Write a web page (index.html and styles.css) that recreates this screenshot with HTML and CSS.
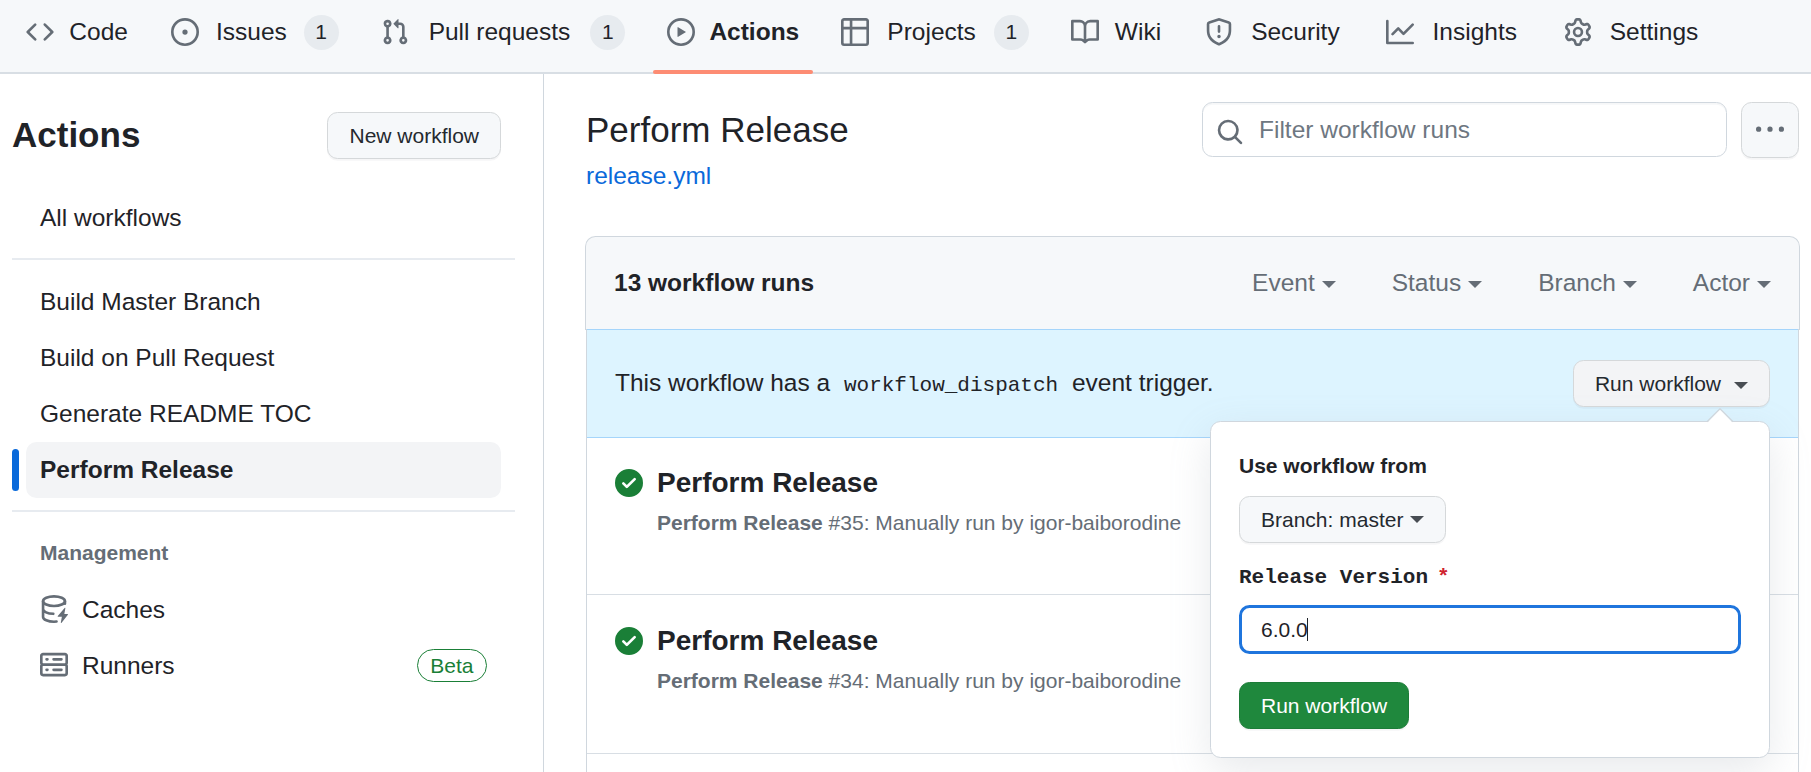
FILE: index.html
```html
<!DOCTYPE html>
<html lang="en">
<head>
<meta charset="utf-8">
<title>Actions · Perform Release</title>
<link rel="stylesheet" href="styles.css">
</head>
<body>
<nav class="repo-nav">
  <a class="tab"><svg class="icon" viewBox="0 0 16 16"><path d="m11.28 3.22 4.25 4.25a.75.75 0 0 1 0 1.06l-4.25 4.25a.749.749 0 0 1-1.275-.326.749.749 0 0 1 .215-.734L13.94 8l-3.72-3.72a.749.749 0 0 1 .326-1.275.749.749 0 0 1 .734.215Zm-6.56 0a.751.751 0 0 1 1.042.018.751.751 0 0 1 .018 1.042L2.06 8l3.72 3.72a.749.749 0 0 1-.326 1.275.749.749 0 0 1-.734-.215L.47 8.53a.75.75 0 0 1 0-1.06Z"/></svg><span class="tab-label" data-content="Code">Code</span></a>
  <a class="tab"><svg class="icon" viewBox="0 0 16 16"><path d="M8 9.5a1.5 1.5 0 1 0 0-3 1.5 1.5 0 0 0 0 3Z"/><path d="M8 0a8 8 0 1 1 0 16A8 8 0 0 1 8 0ZM1.5 8a6.5 6.5 0 1 0 13 0 6.5 6.5 0 0 0-13 0Z"/></svg><span class="tab-label" data-content="Issues">Issues</span><span class="counter">1</span></a>
  <a class="tab"><svg class="icon" viewBox="0 0 16 16"><path d="M1.5 3.25a2.25 2.25 0 1 1 3 2.122v5.256a2.251 2.251 0 1 1-1.5 0V5.372A2.25 2.25 0 0 1 1.5 3.25Zm5.677-.177L9.573.677A.25.25 0 0 1 10 .854V2.5h1A2.5 2.5 0 0 1 13.5 5v5.628a2.251 2.251 0 1 1-1.5 0V5a1 1 0 0 0-1-1h-1v1.646a.25.25 0 0 1-.427.177L7.177 3.427a.25.25 0 0 1 0-.354ZM3.75 2.5a.75.75 0 1 0 0 1.5.75.75 0 0 0 0-1.5Zm0 9.5a.75.75 0 1 0 0 1.5.75.75 0 0 0 0-1.5Zm8.25.75a.75.75 0 1 0 1.5 0 .75.75 0 0 0-1.5 0Z"/></svg><span class="tab-label" data-content="Pull requests">Pull requests</span><span class="counter">1</span></a>
  <a class="tab tab-selected"><svg class="icon" viewBox="0 0 16 16"><path d="M8 0a8 8 0 1 1 0 16A8 8 0 0 1 8 0ZM1.5 8a6.5 6.5 0 1 0 13 0 6.5 6.5 0 0 0-13 0Zm4.879-2.773 4.264 2.559a.25.25 0 0 1 0 .428l-4.264 2.559A.25.25 0 0 1 6 10.559V5.442a.25.25 0 0 1 .379-.215Z"/></svg><span class="tab-label" data-content="Actions">Actions</span></a>
  <a class="tab"><svg class="icon" viewBox="0 0 16 16"><path d="M0 1.75C0 .784.784 0 1.75 0h12.5C15.216 0 16 .784 16 1.75v12.5A1.75 1.75 0 0 1 14.25 16H1.75A1.75 1.75 0 0 1 0 14.25ZM6.5 6.5v8h7.75a.25.25 0 0 0 .25-.25V6.5Zm8-1.5V1.75a.25.25 0 0 0-.25-.25H6.5V5Zm-13 1.5v7.75c0 .138.112.25.25.25H5v-8ZM5 5V1.5H1.75a.25.25 0 0 0-.25.25V5Z"/></svg><span class="tab-label" data-content="Projects">Projects</span><span class="counter">1</span></a>
  <a class="tab"><svg class="icon" viewBox="0 0 16 16"><path d="M0 1.75A.75.75 0 0 1 .75 1h4.253c1.227 0 2.317.59 3 1.501A3.743 3.743 0 0 1 11.006 1h4.245a.75.75 0 0 1 .75.75v10.5a.75.75 0 0 1-.75.75h-4.507a2.25 2.25 0 0 0-1.591.659l-.622.621a.75.75 0 0 1-1.06 0l-.622-.621A2.25 2.25 0 0 0 5.258 13H.75a.75.75 0 0 1-.75-.75Zm7.251 10.324.004-5.073-.002-2.253A2.25 2.25 0 0 0 5.003 2.5H1.5v9h3.757a3.75 3.75 0 0 1 1.994.574ZM8.755 4.75l-.004 7.322a3.752 3.752 0 0 1 1.992-.572H14.5v-9h-3.495a2.25 2.25 0 0 0-2.25 2.25Z"/></svg><span class="tab-label" data-content="Wiki">Wiki</span></a>
  <a class="tab"><svg class="icon" viewBox="0 0 16 16"><path d="M7.467.133a1.748 1.748 0 0 1 1.066 0l5.25 1.68A1.75 1.75 0 0 1 15 3.48V7c0 1.566-.32 3.182-1.303 4.682-.983 1.498-2.585 2.813-5.032 3.855a1.697 1.697 0 0 1-1.33 0c-2.447-1.042-4.049-2.357-5.032-3.855C1.32 10.182 1 8.566 1 7V3.48a1.75 1.75 0 0 1 1.217-1.667Zm.61 1.429a.25.25 0 0 0-.153 0l-5.25 1.68a.25.25 0 0 0-.174.238V7c0 1.358.275 2.666 1.057 3.86.784 1.194 2.121 2.34 4.366 3.297a.196.196 0 0 0 .154 0c2.245-.956 3.582-2.104 4.366-3.298C13.225 9.666 13.5 8.36 13.5 7V3.48a.251.251 0 0 0-.174-.237l-5.25-1.68ZM8.75 4.75v3a.75.75 0 0 1-1.5 0v-3a.75.75 0 0 1 1.5 0ZM9 10.5a1 1 0 1 1-2 0 1 1 0 0 1 2 0Z"/></svg><span class="tab-label" data-content="Security">Security</span></a>
  <a class="tab"><svg class="icon" viewBox="0 0 16 16"><path d="M1.5 1.75V13.5h13.75a.75.75 0 0 1 0 1.5H.75a.75.75 0 0 1-.75-.75V1.75a.75.75 0 0 1 1.5 0Zm14.28 2.53-5.25 5.25a.75.75 0 0 1-1.06 0L7 7.06 4.28 9.78a.751.751 0 0 1-1.042-.018.751.751 0 0 1-.018-1.042l3.25-3.25a.75.75 0 0 1 1.06 0L10 7.94l4.72-4.72a.751.751 0 0 1 1.042.018.751.751 0 0 1 .018 1.042Z"/></svg><span class="tab-label" data-content="Insights">Insights</span></a>
  <a class="tab"><svg class="icon" viewBox="0 0 16 16"><path d="M8 0a8.2 8.2 0 0 1 .701.031C9.444.095 9.99.645 10.16 1.29l.288 1.107c.018.066.079.158.212.224.231.114.454.243.668.386.123.082.233.09.299.071l1.103-.303c.644-.176 1.392.021 1.82.63.27.385.506.792.704 1.218.315.675.111 1.422-.364 1.891l-.814.806c-.049.048-.098.147-.088.294.016.257.016.515 0 .772-.01.147.038.246.088.294l.814.806c.475.469.679 1.216.364 1.891a7.977 7.977 0 0 1-.704 1.217c-.428.61-1.176.807-1.82.63l-1.102-.302c-.067-.019-.177-.011-.3.071a5.909 5.909 0 0 1-.668.386c-.133.066-.194.158-.211.224l-.29 1.106c-.168.646-.715 1.196-1.458 1.26a8.006 8.006 0 0 1-1.402 0c-.743-.064-1.289-.614-1.458-1.26l-.289-1.106c-.018-.066-.079-.158-.212-.224a5.738 5.738 0 0 1-.668-.386c-.123-.082-.233-.09-.299-.071l-1.103.303c-.644.176-1.392-.021-1.82-.63a8.12 8.12 0 0 1-.704-1.218c-.315-.675-.111-1.422.363-1.891l.815-.806c.05-.048.098-.147.088-.294a6.214 6.214 0 0 1 0-.772c.01-.147-.038-.246-.088-.294l-.815-.806C.635 6.045.431 5.298.746 4.623a7.92 7.92 0 0 1 .704-1.217c.428-.61 1.176-.807 1.82-.63l1.102.302c.067.019.177.011.3-.071.214-.143.437-.272.668-.386.133-.066.194-.158.211-.224l.29-1.106C6.009.645 6.556.095 7.299.03 7.53.01 7.764 0 8 0Zm-.571 1.525c-.036.003-.108.036-.137.146l-.289 1.105c-.147.561-.549.967-.998 1.189-.173.086-.34.183-.5.29-.417.278-.97.423-1.529.27l-1.103-.303c-.109-.03-.175.016-.195.045-.22.312-.412.644-.573.99-.014.031-.021.11.059.19l.815.806c.411.406.562.957.53 1.456a4.709 4.709 0 0 0 0 .582c.032.499-.119 1.05-.53 1.456l-.815.806c-.081.08-.073.159-.059.19.162.346.353.677.573.989.02.03.085.076.195.046l1.102-.303c.56-.153 1.113-.008 1.53.27.161.107.328.204.501.29.447.222.85.629.997 1.189l.289 1.105c.029.109.101.143.137.146a6.6 6.6 0 0 0 1.142 0c.036-.003.108-.036.137-.146l.289-1.105c.147-.561.549-.967.998-1.189.173-.086.34-.183.5-.29.417-.278.97-.423 1.529-.27l1.103.303c.109.029.175-.016.195-.045.22-.313.411-.644.573-.99.014-.031.021-.11-.059-.19l-.815-.806c-.411-.406-.562-.957-.53-1.456a4.709 4.709 0 0 0 0-.582c-.032-.499.119-1.05.53-1.456l.815-.806c.081-.08.073-.159.059-.19a6.464 6.464 0 0 0-.573-.989c-.02-.03-.085-.076-.195-.046l-1.102.303c-.56.153-1.113.008-1.53-.27a4.44 4.44 0 0 0-.501-.29c-.447-.222-.85-.629-.997-1.189l-.289-1.105c-.029-.11-.101-.143-.137-.146a6.6 6.6 0 0 0-1.142 0ZM11 8a3 3 0 1 1-6 0 3 3 0 0 1 6 0ZM9.5 8a1.5 1.5 0 1 0-3.001.001A1.5 1.5 0 0 0 9.5 8Z"/></svg><span class="tab-label" data-content="Settings">Settings</span></a>
</nav>

<div class="layout">
  <aside class="sidebar">
    <div class="sidebar-head">
      <h2 class="sidebar-title">Actions</h2>
      <button class="btn">New workflow</button>
    </div>
    <div class="side-item">All workflows</div>
    <div class="divider"></div>
    <div class="side-item">Build Master Branch</div>
    <div class="side-item">Build on Pull Request</div>
    <div class="side-item">Generate README TOC</div>
    <div class="side-item side-item-active">Perform Release</div>
    <div class="divider"></div>
    <div class="side-heading">Management</div>
    <div class="side-item"><svg class="icon" viewBox="0 0 16 16"><g fill="none" stroke="currentColor" stroke-width="1.5" stroke-linecap="round"><ellipse cx="8" cy="3.5" rx="6.25" ry="2.75"/><path d="M1.75 3.5v9c0 1.5 2.8 2.75 6.25 2.75.5 0 1 0 1.45-.08M1.75 8c0 1.5 2.6 2.7 5.85 2.75M14.25 3.5V5"/></g><path d="M14.49 7.58a.25.25 0 0 0-.43-.21l-3.9 4.66a.25.25 0 0 0 .19.41h2.15l-.6 3.26a.25.25 0 0 0 .44.2l3.6-4.66a.25.25 0 0 0-.2-.4H13.9Z"/></svg>Caches</div>
    <div class="side-item"><svg class="icon" viewBox="0 0 16 16"><path d="M1.75 1h12.5c.966 0 1.75.784 1.75 1.75v4c0 .372-.116.717-.314 1 .198.283.314.628.314 1v4a1.75 1.75 0 0 1-1.75 1.75H1.75A1.75 1.75 0 0 1 0 12.75v-4c0-.358.109-.707.314-1a1.739 1.739 0 0 1-.314-1v-4C0 1.784.784 1 1.75 1ZM1.5 2.75v4c0 .138.112.25.25.25h12.5a.25.25 0 0 0 .25-.25v-4a.25.25 0 0 0-.25-.25H1.75a.25.25 0 0 0-.25.25Zm.25 5.75a.25.25 0 0 0-.25.25v4c0 .138.112.25.25.25h12.5a.25.25 0 0 0 .25-.25v-4a.25.25 0 0 0-.25-.25ZM7 4.75A.75.75 0 0 1 7.75 4h4.5a.75.75 0 0 1 0 1.5h-4.5A.75.75 0 0 1 7 4.75ZM7.75 10h4.5a.75.75 0 0 1 0 1.5h-4.5a.75.75 0 0 1 0-1.5ZM3 4.75A.75.75 0 0 1 3.75 4h.5a.75.75 0 0 1 0 1.5h-.5A.75.75 0 0 1 3 4.75ZM3.75 10h.5a.75.75 0 0 1 0 1.5h-.5a.75.75 0 0 1 0-1.5Z"/></svg>Runners<span class="label-beta">Beta</span></div>
  </aside>

  <main class="content">
    <header class="page-head">
      <div>
        <h1 class="page-title">Perform Release</h1>
        <a class="file-link">release.yml</a>
      </div>
      <div class="head-tools">
        <div class="search"><svg class="icon" viewBox="0 0 16 16"><path d="M10.68 11.74a6 6 0 0 1-7.922-8.982 6 6 0 0 1 8.982 7.922l3.04 3.04a.749.749 0 0 1-.326 1.275.749.749 0 0 1-.734-.215ZM11.5 7a4.499 4.499 0 1 0-8.997 0A4.499 4.499 0 0 0 11.5 7Z"/></svg><span>Filter workflow runs</span></div>
        <button class="btn btn-more"><svg class="icon" viewBox="0 0 16 16"><path d="M8 9a1.5 1.5 0 1 0 0-3 1.5 1.5 0 0 0 0 3ZM1.5 9a1.5 1.5 0 1 0 0-3 1.5 1.5 0 0 0 0 3Zm13 0a1.5 1.5 0 1 0 0-3 1.5 1.5 0 0 0 0 3Z"/></svg></button>
      </div>
    </header>

    <section class="runs">
      <div class="runs-head">
        <strong>13 workflow runs</strong>
        <div class="filters">
          <span class="filter">Event<i class="caret"></i></span>
          <span class="filter">Status<i class="caret"></i></span>
          <span class="filter">Branch<i class="caret"></i></span>
          <span class="filter">Actor<i class="caret"></i></span>
        </div>
      </div>
      <div class="runs-body">
        <div class="dispatch">
          <p class="dispatch-text">This workflow has a <code class="dispatch-code">workflow_dispatch</code> event trigger.</p>
          <div class="dispatch-menu">
            <button class="btn btn-open">Run workflow<i class="caret"></i></button>
            <div class="popover">
              <svg class="popover-arrow" viewBox="0 0 28 15"><path class="arrow-fill" d="M1 15 14 1 27 15Z"/><path class="arrow-line" d="M1 13.8 14 .8 27 13.8"/></svg>
              <div class="field-title">Use workflow from</div>
              <button class="btn btn-branch">Branch: master<i class="caret"></i></button>
              <div class="field-title field-mono">Release Version<span class="required">*</span></div>
              <div class="text-input">6.0.0<span class="cursor"></span></div>
              <button class="btn btn-primary">Run workflow</button>
            </div>
          </div>
        </div>
        <article class="run">
          <svg class="icon icon-ok" viewBox="0 0 16 16"><path d="M8 16A8 8 0 1 1 8 0a8 8 0 0 1 0 16Zm3.78-9.72a.751.751 0 0 0-.018-1.042.751.751 0 0 0-1.042-.018L6.75 9.19 5.28 7.72a.751.751 0 0 0-1.042.018.751.751 0 0 0-.018 1.042l2 2a.75.75 0 0 0 1.06 0Z"/></svg>
          <div>
            <h3 class="run-title">Perform Release</h3>
            <p class="run-meta"><b>Perform Release</b> #35: Manually run by igor-baiborodine</p>
          </div>
        </article>
        <article class="run">
          <svg class="icon icon-ok" viewBox="0 0 16 16"><path d="M8 16A8 8 0 1 1 8 0a8 8 0 0 1 0 16Zm3.78-9.72a.751.751 0 0 0-.018-1.042.751.751 0 0 0-1.042-.018L6.75 9.19 5.28 7.72a.751.751 0 0 0-1.042.018.751.751 0 0 0-.018 1.042l2 2a.75.75 0 0 0 1.06 0Z"/></svg>
          <div>
            <h3 class="run-title">Perform Release</h3>
            <p class="run-meta"><b>Perform Release</b> #34: Manually run by igor-baiborodine</p>
          </div>
        </article>
      </div>
    </section>
  </main>
</div>
</body>
</html>
```

FILE: styles.css
```css
* { box-sizing: border-box; }

body {
  margin: 0;
  height: 772px;
  overflow: hidden;
  display: flex;
  flex-direction: column;
  background: #fff;
  color: #1f2328;
  font: 24.5px/36px "Liberation Sans", Arial, sans-serif;
}

h1, h2, h3, p { margin: 0; }

.icon { width: 28px; height: 28px; flex: none; fill: currentColor; color: #656d76; }

/* Repository tabs */
.repo-nav {
  flex: none;
  display: flex;
  gap: 14px;
  height: 74px;
  padding: 0 12px 8px;
  background: #f6f8fa;
  border-bottom: 2px solid #d8dee4;
}
.tab {
  position: relative;
  display: flex;
  align-items: center;
  gap: 14px;
  padding: 0 14px;
  white-space: nowrap;
}
.tab-label { text-align: center; }
.tab-label::before {
  content: attr(data-content);
  display: block;
  height: 0;
  font-weight: 700;
  visibility: hidden;
}
.tab-selected { font-weight: 700; }
.tab-selected::after {
  content: "";
  position: absolute;
  left: 0;
  right: 0;
  bottom: -10px;
  height: 4px;
  border-radius: 2px;
  background: #fd8c73;
}
.counter {
  width: 35px;
  height: 35px;
  border-radius: 50%;
  background: #e7ebef;
  font-size: 21px;
  line-height: 34px;
  text-align: center;
}

.layout { flex: 1; display: flex; min-height: 0; }

/* Sidebar */
.sidebar {
  flex: none;
  width: 544px;
  padding: 38px 28px 0 12px;
  border-right: 1px solid #d0d7de;
}
.sidebar-head {
  display: flex;
  align-items: center;
  justify-content: space-between;
  height: 47px;
  margin: 0 14px 31px 0;
}
.sidebar-title { margin-top: -2px; font-size: 35px; line-height: 46px; }
.side-item {
  position: relative;
  display: flex;
  align-items: center;
  gap: 14px;
  height: 56px;
  margin: 0 14px;
  padding: 0 14px;
  border-radius: 10.5px;
}
.side-item .icon { margin-top: -2px; }
.side-item-active { background: #f3f4f6; font-weight: 700; }
.side-item-active::before {
  content: "";
  position: absolute;
  left: -14px;
  top: 7px;
  width: 7px;
  height: 42px;
  border-radius: 4px;
  background: #0969da;
}
.divider { height: 2px; margin: 12px 0 14px; background: #e7ebf0; }
.side-heading {
  height: 56px;
  margin-left: 28px;
  color: #656d76;
  font-size: 21px;
  font-weight: 700;
  line-height: 53px;
}
.label-beta {
  height: 33px;
  margin: -1px 0 0 auto;
  padding: 0 12.5px;
  border: 1px solid #1a7f37;
  border-radius: 17px;
  color: #1a7f37;
  font-size: 21px;
  line-height: 31px;
}

/* Buttons */
.btn {
  display: inline-flex;
  align-items: center;
  height: 47px;
  padding: 0 21px;
  border: 1px solid #d5d8da;
  border-radius: 10.5px;
  background: #f6f8fa;
  box-shadow: 0 1.75px 0 rgba(31, 35, 40, .04);
  color: #24292f;
  font: 21px/30px "Liberation Sans", Arial, sans-serif;
  white-space: nowrap;
}
.caret {
  flex: none;
  width: 0;
  height: 0;
  margin: 0 0 0 7px;
  border: 7px solid transparent;
  border-top-color: currentColor;
  border-bottom: 0;
}
.btn .caret { border-top-color: #484d53; }

/* Page header */
.content { flex: 1; display: flex; flex-direction: column; min-width: 0; padding: 28px 11px 0 41px; }
.page-head { display: flex; justify-content: space-between; height: 134px; padding: 0 1px; }
.page-title { font-size: 35px; font-weight: 400; line-height: 56px; }
.file-link { display: block; color: #0969da; line-height: 35px; }
.head-tools { display: flex; gap: 14px; align-items: flex-start; }
.search {
  display: flex;
  align-items: center;
  gap: 15px;
  width: 525px;
  height: 55px;
  padding: 0 13px;
  border: 1px solid #d0d7de;
  border-radius: 10.5px;
  box-shadow: inset 0 1.75px 0 rgba(208, 215, 222, .2);
  color: #6e7781;
}
.search .icon { margin-top: 4px; }
.btn-more { width: 58px; height: 56px; padding: 0 14px; }

/* Runs */
.runs { flex: 1; display: flex; flex-direction: column; }
.runs-head {
  display: flex;
  align-items: center;
  justify-content: space-between;
  height: 94px;
  padding: 0 28px 2px;
  border: 1px solid #d0d7de;
  border-bottom: 0;
  border-radius: 10.5px 10.5px 0 0;
  background: #f6f8fa;
}
.filters { display: flex; gap: 56px; color: #656d76; }
.filter { display: flex; align-items: center; }
.filter .caret { margin-top: 4px; }
.runs-body {
  flex: 1;
  margin: -1px 1px 0;
  border: 1px solid #d0d7de;
  border-width: 0 1px;
}
.dispatch {
  display: flex;
  align-items: center;
  justify-content: space-between;
  height: 109px;
  padding: 0 28px;
  border: 1px solid #a5d5fb;
  border-width: 1px 0;
  background: #ddf4ff;
}
.dispatch-text { margin-top: -2px; }
.dispatch-code { padding: 0 7px; font: 21px "Liberation Mono", monospace; }
.dispatch-menu { position: relative; }
.btn-open { background: #f3f4f6; display: flex; }
.btn-open .caret { margin-left: 13px; margin-top: 4px; }

.run { display: flex; gap: 14px; height: 157px; padding: 31px 28px 0; border-bottom: 1px solid #d8dee4; }
.run + .run { height: 159px; padding-top: 32px; }
.icon-ok { color: #1a7f37; }
.run-title { font-size: 28px; line-height: 28px; }
.run-meta { margin-top: 10px; color: #656d76; font-size: 21px; line-height: 32px; }

/* Dispatch form */
.popover {
  position: absolute;
  top: 61px;
  right: 0;
  z-index: 2;
  width: 560px;
  height: 337px;
  padding: 28px;
  border: 1px solid #d0d7de;
  border-radius: 10.5px;
  background: #fff;
  box-shadow: 0 14px 42px rgba(140, 149, 159, .2);
}
.popover-arrow { position: absolute; top: -14px; right: 35px; width: 28px; height: 15px; }
.arrow-fill { fill: #fff; }
.arrow-line { fill: none; stroke: #d0d7de; stroke-width: 1.4; }
.field-title { font-size: 21px; font-weight: 700; line-height: 32px; }
.btn-branch { display: flex; margin-top: 14px; }
.field-mono {
  display: flex;
  gap: 9px;
  margin-top: 19px;
  font-family: "Liberation Mono", monospace;
}
.required { color: #cf222e; }
.text-input {
  display: flex;
  align-items: center;
  height: 49px;
  margin-top: 11px;
  padding: 0 19px;
  border: 3px solid #1f75dd;
  border-radius: 10.5px;
  font-size: 21px;
}
.cursor { width: 1px; height: 23px; margin-left: -1px; background: #1f2328; }
.btn-primary { display: flex; margin-top: 28px; border-color: #1c7c38; background: #1f883d; color: #fff; }
```
